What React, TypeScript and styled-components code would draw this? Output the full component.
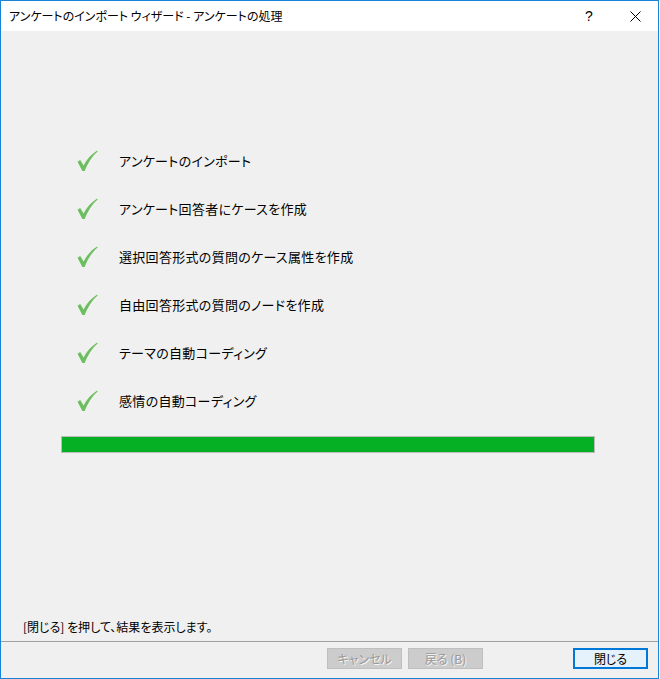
import React from "react";
import styled, { createGlobalStyle } from "styled-components";

const Global = createGlobalStyle`
  html, body { margin: 0; padding: 0; background: #ffffff; }
  body { font-family: "Noto Sans CJK JP", "Noto Sans", sans-serif; }
  * { box-sizing: border-box; }
`;

const Window = styled.div`
  width: 659px;
  height: 679px;
  border: 1px solid #1883d7;
  display: flex;
  flex-direction: column;
  background: #f0f0f0;
  font-family: "Noto Sans CJK JP", "Noto Sans", sans-serif;
  font-feature-settings: "palt";
  color: #000;
`;

const TitleBar = styled.div`
  height: 30px;
  background: #ffffff;
  display: flex;
  align-items: center;
  padding-left: 8px;
  font-size: 12px;
  flex-shrink: 0;
`;

const TitleText = styled.div`
  flex: 1;
  line-height: 30px;
  margin-top: -1px;
`;

const TitleButton = styled.div<{ $w: number }>`
  width: ${(p) => p.$w}px;
  height: 30px;
  display: flex;
  align-items: center;
  justify-content: center;
  font-family: "Segoe UI", "Liberation Sans", sans-serif;
  font-size: 14px;
`;

const Body = styled.div`
  flex: 1;
  display: flex;
  flex-direction: column;
`;

const Main = styled.div`
  flex: 1;
  display: flex;
  flex-direction: column;
  padding-top: 106px;
`;

const Steps = styled.div`
  display: flex;
  flex-direction: column;
  padding-left: 60px;
`;

const StepRow = styled.div`
  height: 48px;
  display: flex;
  align-items: center;
  padding-left: 16px;
  gap: 21px;
  font-size: 13px;
`;

const StepText = styled.span`
  line-height: 16px;
  letter-spacing: 0.3px;
`;

const Progress = styled.div`
  margin-top: 11px;
  width: 534px;
  height: 17px;
  border: 1px solid #bcbcbc;
  background: #e6e6e6;
`;

const ProgressFill = styled.div`
  height: 100%;
  background: #06b025;
`;

const Spacer = styled.div`
  flex: 1;
`;

const Hint = styled.div`
  font-size: 12px;
  padding-left: 22px;
  line-height: 16px;
  margin-bottom: 6px;
`;

const ButtonBar = styled.div`
  border-top: 1px solid #a0a0a0;
  height: 37px;
  display: flex;
  align-items: flex-start;
  padding-top: 6px;
  padding-left: 326px;
  gap: 6px;
  flex-shrink: 0;
`;

const Button = styled.button<{ $variant: "disabled" | "default"; $ml?: number }>`
  width: 75px;
  height: 21px;
  margin: 0;
  margin-left: ${(p) => p.$ml ?? 0}px;
  padding: 0;
  font-family: "Noto Sans CJK JP", "Noto Sans", sans-serif;
  font-feature-settings: "palt";
  font-size: 12px;
  line-height: 17px;
  display: flex;
  align-items: center;
  justify-content: center;
  border: ${(p) => (p.$variant === "default" ? "2px solid #0078d7" : "1px solid #bfbfbf")};
  background: ${(p) => (p.$variant === "default" ? "#e5f1fb" : "#cccccc")};
  color: ${(p) => (p.$variant === "default" ? "#000000" : "#9a9a9a")};
  text-shadow: ${(p) => (p.$variant === "default" ? "none" : "1px 1px 0 #f6f6f6")};
`;

const Check = () => (
  <svg width="21" height="22" viewBox="0 0 21 22">
    <path
      d="M0.5 11.8 L3.2 10 L6.6 15.6 C9.5 9.6 14 4.2 20.2 0.4 L20.6 1.4 C15.2 6 10.8 12.6 7.6 21 L5.4 21 Z"
      fill="#6cbf5e"
    />
  </svg>
);

const steps = [
  "アンケートのインポート",
  "アンケート回答者にケースを作成",
  "選択回答形式の質問のケース属性を作成",
  "自由回答形式の質問のノードを作成",
  "テーマの自動コーディング",
  "感情の自動コーディング",
];

export default function App() {
  return (
    <>
      <Global />
      <Window>
        <TitleBar>
          <TitleText>アンケートのインポート ウィザード - アンケートの処理</TitleText>
          <TitleButton $w={46}>?</TitleButton>
          <TitleButton $w={46}>
            <svg width="11" height="11" viewBox="0 0 11 11">
              <path d="M0.5 0.5 L10.5 10.5 M10.5 0.5 L0.5 10.5" stroke="#000" strokeWidth="1" />
            </svg>
          </TitleButton>
        </TitleBar>
        <Body>
          <Main>
            <Steps>
              {steps.map((s) => (
                <StepRow key={s}>
                  <Check />
                  <StepText>{s}</StepText>
                </StepRow>
              ))}
              <Progress>
                <ProgressFill style={{ width: "100%" }} />
              </Progress>
            </Steps>
            <Spacer />
            <Hint>[閉じる] を押して、結果を表示します。</Hint>
          </Main>
          <ButtonBar>
            <Button $variant="disabled">キャンセル</Button>
            <Button $variant="disabled">戻る (B)</Button>
            <Button $variant="default" $ml={84}>閉じる</Button>
          </ButtonBar>
        </Body>
      </Window>
    </>
  );
}
